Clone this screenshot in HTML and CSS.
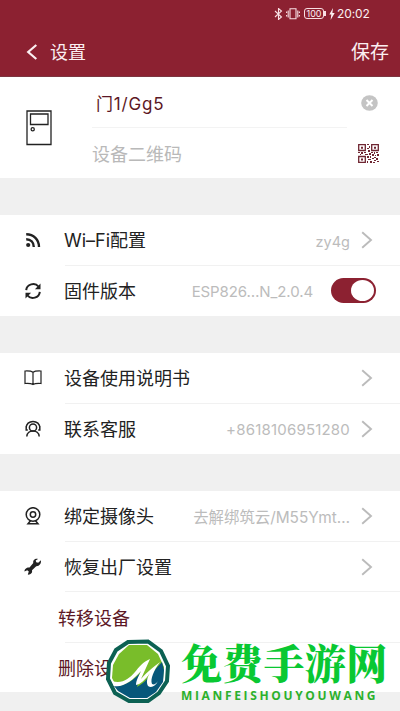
FILE: index.html
```html
<!DOCTYPE html>
<html lang="zh-CN">
<head>
<meta charset="utf-8">
<title>设置</title>
<link rel="stylesheet" href="styles.css">
</head>
<body>
<main class="screen">
  <header class="header">
    <div class="status">
      <svg class="bt" width="9" height="12" viewBox="0 0 9 12"><path d="M1 3l6.500 6L4.500 11.500V.5l3 2.500L1 9"/></svg>
      <svg class="vib" width="14" height="12" viewBox="0 0 14 12"><path d="M4 .8h6v10H4zM2.200 2.500v7M.6 3.500v1.500M.6 7v1.500M11.800 2.500v7M13.400 3.500v1.500M13.400 7v1.500"/></svg>
      <span class="battery">100</span>
      <svg class="bolt" width="6" height="12" viewBox="0 0 6 12"><path d="M4 0L.3 6.600h2L1.600 12 5.700 5H3.400z"/></svg>
      <span class="time">20:02</span>
    </div>
    <nav class="bar">
      <svg class="back" width="12" height="18" viewBox="0 0 12 18"><path d="M10.300 2L2.200 9l8.100 7"/></svg>
      <h1 class="title">设置</h1>
      <span class="save">保存</span>
    </nav>
  </header>

  <section class="card device">
    <svg class="door" width="26" height="36" viewBox="0 0 26 36"><path d="M1 1h24v33.500H1zM4.500 4h17.500v10.500H4.500z"/><circle cx="6.700" cy="19.200" r="1.600"/></svg>
    <div class="fields">
      <div class="field named"><span class="name">门1/Gg5</span>
        <svg class="clear" width="17" height="16" viewBox="0 0 17 16"><ellipse cx="8.500" cy="8" rx="8.300" ry="7.800"/><path d="M5.500 5l6 6M11.500 5l-6 6"/></svg>
      </div>
      <div class="field"><span class="hint">设备二维码</span>
        <svg class="qr" width="21" height="19" viewBox="0 0 21 19">
          <path class="finder" d="M.7.7h6.600v5.800H.7zM13.700.7h6.600v5.800h-6.600zM.7 12.500h6.600v5.800H.7z"/>
          <path d="M3 2.700h2v2H3zM16 2.700h2v2h-2zM3 14.500h2v2H3zM9 0h2v1H9zM11 2h1v2h-1zM9 4h2v1H9zM10 6h2v2h-2zM0 8h2v1H0zM3 8h2v2H3zM6 8h2v1H6zM2 10h1v1H2zM7 10h3v1H7zM13 8h2v1h-2zM16 8h1v2h-1zM18 8h2v1h-2zM11 9h2v2h-2zM14 10h2v2h-2zM17 11h1v1h-1zM19 10h2v2h-2zM9 12h2v2H9zM12 12h1v2h-1zM16 13h2v1h-2zM14 14h2v1h-2zM18 14h2v2h-2zM10 15h3v1h-3zM16 16h2v1h-2zM9 17h1v2H9zM12 17h2v2h-2zM15 18h2v1h-2zM19 17h2v1h-2z"/>
        </svg>
      </div>
    </div>
  </section>

  <section class="card">
    <div class="row">
      <svg class="icon solid" viewBox="0 0 18 18"><circle cx="4.200" cy="14" r="2.100"/><path class="wave" d="M2.200 8.200c4.500 0 7.600 3.200 7.600 7.700M2.200 3.200c7.500 0 12.800 5.300 12.800 12.700"/></svg>
      <span class="label">Wi–Fi配置</span><span class="value zone">zy4g</span>
      <svg class="chevron" viewBox="0 0 12 18"><path d="M1.200 1.200L10 9l-8.800 7.800"/></svg>
    </div>
    <div class="row">
      <svg class="icon sync" viewBox="0 0 18 18"><path d="M2.200 8.200c.5-6 8.700-8.300 12.200-3.700M15.800 9.800c-.5 6-8.700 8.300-12.200 3.700"/><path class="fill" d="M16.500 1.500v5.800h-5.600zM1.500 16.500v-5.800h5.600z"/></svg>
      <span class="label">固件版本</span><span class="value version">ESP826…N_2.0.4</span>
      <span class="switch"></span>
    </div>
  </section>

  <section class="card">
    <div class="row">
      <svg class="icon" viewBox="0 0 18 18"><path d="M9 3.300C7 1.700 4 1.900 1 2v12.500c3-.2 6-.2 8 1 2-1.200 5-1.200 8-1V2c-3-.1-6-.3-8 1.300zv12.200"/></svg>
      <span class="label">设备使用说明书</span>
      <svg class="chevron" viewBox="0 0 12 18"><path d="M1.200 1.200L10 9l-8.800 7.800"/></svg>
    </div>
    <div class="row">
      <svg class="icon agent" viewBox="0 0 18 18"><circle cx="9" cy="7.500" r="3.600"/><path d="M2.200 8.500C1.500-1 16.500-1 15.800 8.500M2.200 6v4h1.600M15.800 6v4h-1.600M2.800 16.500c.2-7.300 12.200-7.300 12.400 0"/></svg>
      <span class="label">联系客服</span><span class="value phone">+8618106951280</span>
      <svg class="chevron" viewBox="0 0 12 18"><path d="M1.200 1.200L10 9l-8.800 7.800"/></svg>
    </div>
  </section>

  <section class="card last">
    <div class="row">
      <svg class="icon agent" viewBox="0 0 18 18"><circle cx="9" cy="7.500" r="6.800"/><circle cx="9" cy="7.500" r="2.700"/><path d="M6.500 13.700L4 16.700h10l-2.500-3"/></svg>
      <span class="label">绑定摄像头</span><span class="value camera">去解绑筑云/M55Ymt…</span>
      <svg class="chevron" viewBox="0 0 12 18"><path d="M1.200 1.200L10 9l-8.800 7.800"/></svg>
    </div>
    <div class="row">
      <svg class="icon solid" viewBox="0 0 18 18"><path d="M16.900 2.300l-2.700 2.500-2-.5-.5-1.800L14 .9c-3-.6-5.300 1.200-4.700 4.200L5.500 9.500C3 9 .3 11 .5 13.500l2.700-1.300 1.600 1.400-1 3c3 .3 4.800-2 4.200-4.400l4.200-4c3.200.2 5.300-2.900 4.700-5.900z"/></svg>
      <span class="label">恢复出厂设置</span>
      <svg class="chevron" viewBox="0 0 12 18"><path d="M1.200 1.200L10 9l-8.800 7.800"/></svg>
    </div>
    <div class="row action"><span>转移设备</span></div>
    <div class="row action"><span>删除设备</span></div>
  </section>

  <aside class="watermark">
    <svg class="emblem" width="66" height="66" viewBox="0 0 66 66">
      <path class="ring" d="M23 3L43 2.500 56 12 63 27 62 42 54 54 43 62 24 62 10 54 3 40 4 24 11 11z"/>
      <path class="leaf" d="M24 6h18l11 9 6 13-1 13-7 10-9 7H25l-12-7-6-12 1-13 6-11z"/>
      <path class="sea" d="M9 47c11 1 21-7 27-14l-4 15C43 42 47 33 57 23l2 8-1 12-7 10-9 6H25l-12-7z"/>
      <path class="swash" d="M7 42c10 3 17-2 23-9 4-5 8-10 15-13l-9 20c6-7 11-11 19-17-6 8-10 17-8 22 2 1 4 0 6-3-3 6-7 7-10 5-2-4-1-8 2-13-5 7-9 11-14 12 0-5 3-9 5-14-8 9-18 17-27 15z"/>
    </svg>
    <div class="wordmark"><strong>免费手游网</strong><span>MIANFEISHOUYOUWANG</span></div>
  </aside>
</main>
</body>
</html>
```
FILE: styles.css
```css
* { box-sizing: border-box; }
body {
  margin: 0;
  font-family: Inter, "Noto Sans CJK SC", sans-serif;
  color: #222;
  background: #f0f0f0;
}
svg { display: block; flex: none; fill: none; }
.screen {
  position: relative;
  height: 711px;
  overflow: hidden;
  display: flex;
  flex-direction: column;
  gap: 37px;
}
.header {
  height: 77px;
  margin-bottom: -37px;
  background: #8c2131;
  border-bottom: 1px solid #7c3540;
  color: #fbeff1;
  flex: none;
}
.status {
  height: 27px;
  padding-right: 31px;
  display: flex;
  justify-content: flex-end;
  align-items: center;
}
.status svg { stroke: #f8dfe3; stroke-width: 1.1; }
.status .vib { margin-left: 3px; }
.battery {
  position: relative;
  width: 20px;
  height: 11px;
  margin: 0 5px 0 4px;
  border: 1px solid #f8dfe3;
  border-radius: 3px;
  font-size: 9px;
  line-height: 9px;
  text-align: center;
}
.battery::after {
  content: "";
  position: absolute;
  left: 19px;
  top: 2px;
  width: 2px;
  height: 5px;
  background: #f8dfe3;
}
.status .bolt { fill: #fbeff1; stroke: none; }
.time { width: 32px; margin-left: 2px; font-size: 12px; letter-spacing: -.1px; white-space: nowrap; }
.bar { height: 50px; padding: 0 11px 0 26px; display: flex; align-items: center; }
.back { stroke: #fbeff1; stroke-width: 2.2; }
.title { margin: 0 auto 0 12px; padding-top: 1px; font-size: 18px; line-height: 26px; font-weight: 400; }
.save { padding-top: 2px; font-size: 19px; line-height: 26px; }
.card { background: #fff; flex: none; height: 101px; }
.device { display: flex; padding-left: 26px; }
.door { margin-top: 33px; stroke: #222; stroke-width: 1.3; }
.fields { flex: 1; padding-left: 40px; }
.field { height: 50px; display: flex; align-items: center; justify-content: space-between; padding-right: 21px; }
.named { position: relative; height: 51px; padding-left: 4px; padding-right: 22px; }
.named::after {
  content: "";
  position: absolute;
  left: 0;
  right: 53px;
  top: 50px;
  height: 1px;
  background: #f3f3f3;
}
.name { font-size: 17px; letter-spacing: .8px; color: #5c1725; }
.hint { font-size: 18px; color: #b9b9b9; }
.clear { fill: #c4c4c4; stroke: #fff; stroke-width: 2; }
.clear ellipse { stroke: none; }
.qr { fill: #6f2632; }
.qr .finder { fill: none; stroke: #6f2632; stroke-width: 1.3; }
.row { position: relative; height: 50.5px; display: flex; align-items: center; padding: 0 27px 0 24px; }
.row:not(:last-child)::after {
  content: "";
  position: absolute;
  left: 65px;
  right: 0;
  bottom: 0;
  height: 1px;
  background: #f1f1f1;
}
.icon { width: 18px; height: 18px; stroke: #222; stroke-width: 1.2; }
.solid { fill: #222; stroke: none; }
.wave { fill: none; stroke: #222; stroke-width: 2.4; }
.sync { stroke-width: 2; }
.sync .fill { fill: #222; stroke: none; }
.agent { stroke-width: 1.5; }
.label { margin: 0 auto 0 22px; padding-top: 2px; font-size: 18px; line-height: 26px; white-space: nowrap; }
.value { margin-right: 11px; padding-top: 2px; font-size: 15px; color: #bcbcbc; white-space: nowrap; }
.zone { font-size: 14.5px; }
.version { margin-right: 18px; letter-spacing: -.1px; }
.phone { padding-top: 1px; letter-spacing: .2px; }
.camera { padding-top: 0; font-size: 15.4px; }
.chevron { width: 12px; height: 18px; stroke: #bbb; stroke-width: 1.9; }
.switch { width: 45px; height: 25px; margin-right: -3px; padding: 2px; border-radius: 13px; background: #8c2131; flex: none; }
.switch::before { content: ""; display: block; width: 23px; height: 21px; margin-left: 18px; border-radius: 50%; background: #fff; }
.last { height: 201px; }
.action { padding-left: 58px; color: #5c1725; font-size: 18px; }
.action span { margin-top: -1px; }
.watermark { position: absolute; left: 105px; top: 639px; display: flex; }
.emblem .ring { fill: #fff; stroke: #0c6153; stroke-width: 4; }
.leaf { fill: #79bd2a; }
.sea { fill: #07577a; }
.swash { fill: #fff; }
.wordmark { width: 215px; margin-left: 10px; color: #09c832; white-space: nowrap; }
.wordmark strong { display: block; height: 50px; font: 900 41px/46px "Noto Serif CJK SC", "Noto Sans CJK SC", serif; letter-spacing: .3px; }
.wordmark span { display: block; color: #2cb12c; font: 700 12px/14px "Open Sans", sans-serif; letter-spacing: 2.65px; }
```
